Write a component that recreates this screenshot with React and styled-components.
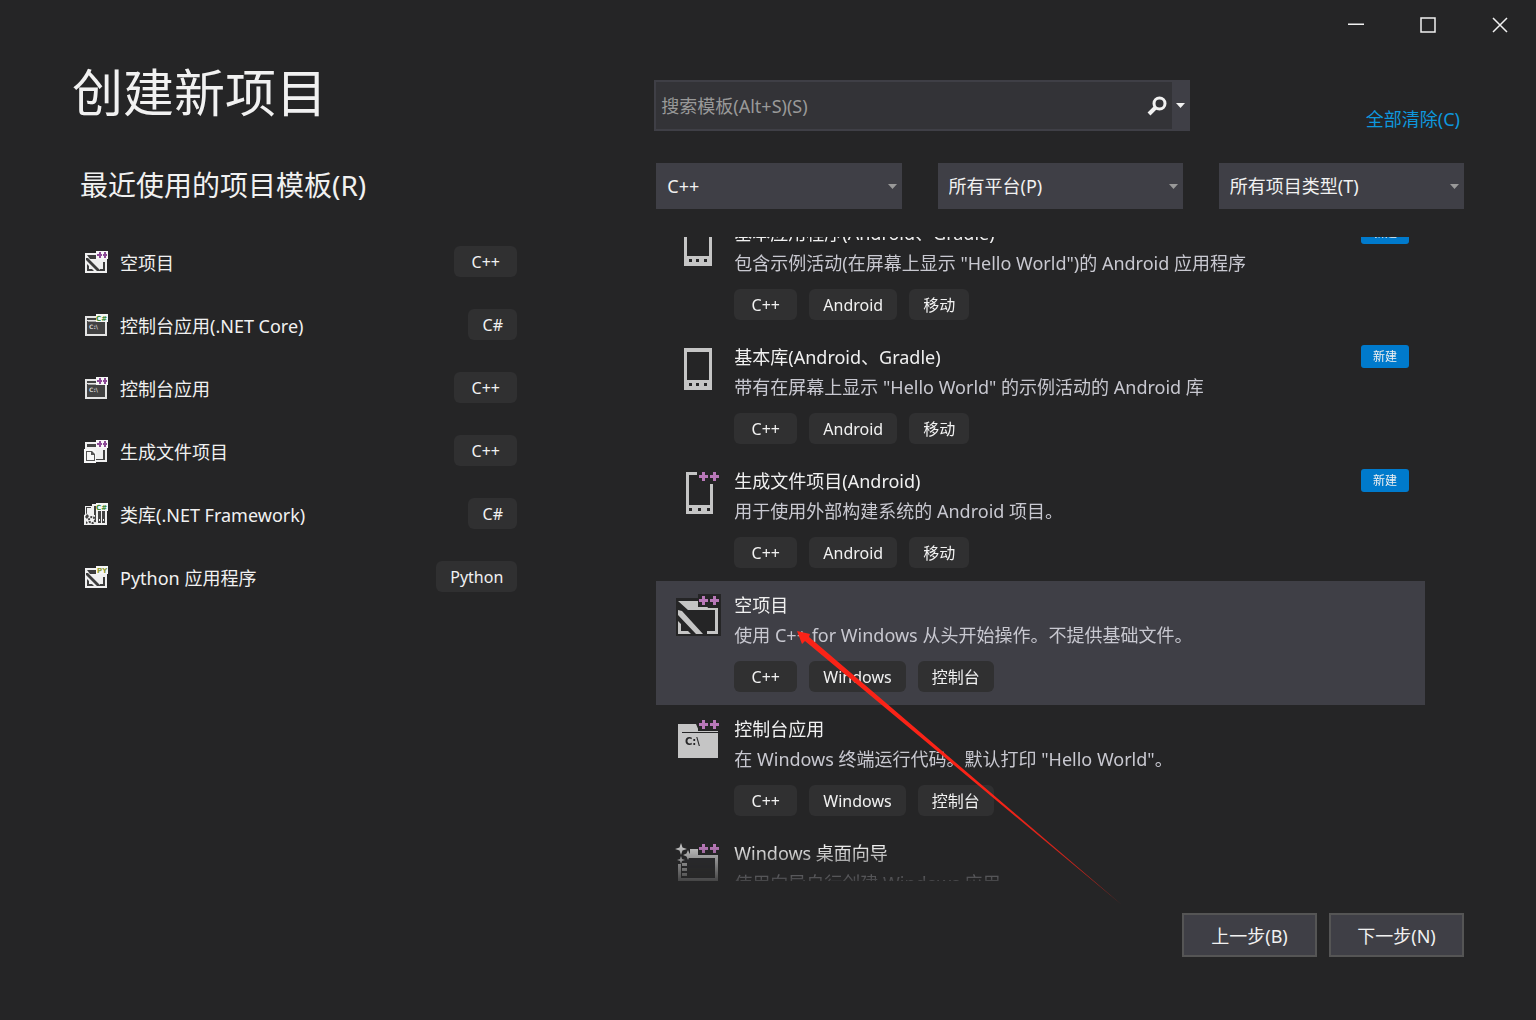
import { useLayoutEffect, useRef, useState } from 'react';
import styled, { ThemeProvider, createGlobalStyle } from 'styled-components';

const theme = {
  bg: '#252526',
  control: '#3f3f46',
  field: '#333337',
  tag: '#303031',
  text: '#f1f1f1',
  muted: '#c8c8d0',
  hint: '#999999',
  blue: '#007acc',
  link: '#0e97dd',
  icon: '#c5c5c5',
  plus: '#b878b8',
};

const GlobalStyle = createGlobalStyle`
  * {
    box-sizing: border-box;
  }
  body {
    margin: 0;
    background: ${theme.bg};
  }
  body, button, input, select {
    font-family: 'Noto Sans', 'Noto Sans CJK SC', sans-serif;
    font-size: 18px;
    color: ${theme.text};
  }
  button {
    padding: 0;
    background: none;
    border: 0;
    text-align: left;
  }
  ul {
    margin: 0;
    padding: 0;
    list-style: none;
  }
`;

const Window = styled.div`
  position: relative;
  display: flex;
  flex-direction: column;
  height: 100vh;
  min-height: 640px;
  overflow: hidden;
`;

const TitleBar = styled.div`
  display: flex;
  justify-content: flex-end;
`;

const WindowButton = styled.button`
  display: grid;
  place-items: center;
  width: 72px;
  height: 50px;
  &:hover {
    background: ${props => props.theme.control};
  }
`;

const Columns = styled.main`
  display: grid;
  flex: 1;
  grid-template-columns: minmax(0, 11fr) minmax(0, 20fr);
  grid-template-rows: minmax(0, 1fr);
  column-gap: 137px;
  min-height: 0;
  padding: 0 72px;
`;

const Recent = styled.section`
  padding-top: 12px;
`;

const PageTitle = styled.h1`
  margin: 0;
  font-size: 51px;
  font-weight: 400;
  line-height: 60px;
`;

const RecentTitle = styled.h2`
  margin: 43px 0 25px;
  padding-left: 8px;
  font-size: 28px;
  font-weight: 400;
  line-height: 40px;
`;

const RecentItem = styled.button`
  display: grid;
  grid-template-columns: 24px 1fr auto;
  align-items: center;
  column-gap: 12px;
  width: 100%;
  height: 63px;
  padding-left: 12px;
`;

const Tag = styled.span`
  min-width: ${props => (props.$wide ? 63 : 49)}px;
  padding: 1px 14px 0;
  background: ${props => props.theme.tag};
  border-radius: 6px;
  font-size: 16px;
  line-height: 30px;
  text-align: center;
`;

const Picker = styled.section`
  display: flex;
  flex-direction: column;
  min-height: 0;
  padding-top: 30px;
`;

const SearchRow = styled.div`
  display: flex;
  justify-content: space-between;
  gap: 48px;
`;

const SearchBox = styled.div`
  display: flex;
  flex: 0 1 536px;
  height: 51px;
  background: ${props => props.theme.field};
  border: 2px solid ${props => props.theme.control};
`;

const SearchInput = styled.input`
  flex: 1;
  min-width: 0;
  padding: 0 5px;
  background: none;
  border: 0;
  outline: 0;
  &::placeholder {
    color: ${props => props.theme.hint};
    opacity: 1;
  }
`;

const SearchButton = styled.button`
  display: grid;
  place-items: center;
  width: 30px;
`;

const SearchMenu = styled.button`
  display: grid;
  place-items: center;
  width: 16px;
  background: ${props => props.theme.control};
`;

const ClearLink = styled.a`
  align-self: flex-end;
  padding-right: 4px;
  color: ${props => props.theme.link};
  line-height: 24px;
  text-decoration: none;
  white-space: nowrap;
`;

const Filters = styled.div`
  display: grid;
  grid-template-columns: repeat(3, minmax(0, 1fr));
  column-gap: 36px;
  margin: 32px 0 28px;
  padding-left: 2px;
`;

const Filter = styled.label`
  display: grid;
  align-items: center;
  height: 46px;
  background: ${props => props.theme.control};
  & > * {
    grid-area: 1 / 1;
  }
  svg {
    justify-self: end;
    margin-right: 5px;
    pointer-events: none;
  }
`;

const Select = styled.select`
  width: 100%;
  height: 100%;
  padding: 0 24px 0 11px;
  appearance: none;
  background: none;
  border: 0;
  option {
    background: ${props => props.theme.field};
  }
`;

const Templates = styled.ul`
  flex: 1;
  min-height: 0;
  margin: 0 39px 0 2px;
  overflow-y: auto;
  scrollbar-width: none;
  mask-image: linear-gradient(to top, rgba(0, 0, 0, 0.2), #000 36px);
`;

const Template = styled.button`
  display: grid;
  grid-template-columns: 48px 1fr auto;
  column-gap: 12px;
  width: 100%;
  height: 124px;
  padding: 11px 16px 0 18px;
  background: ${props => (props.$selected ? props.theme.control : 'none')};
`;

const TemplateText = styled.div`
  line-height: 30px;
  white-space: nowrap;
`;

const TemplateName = styled.div`
  margin-top: -2px;
`;

const TemplateInfo = styled.div`
  color: ${props => props.theme.muted};
`;

const Tags = styled.div`
  display: flex;
  gap: 12px;
  margin-top: 11px;
`;

const Badge = styled.span`
  width: 48px;
  height: 23px;
  margin-top: 1px;
  background: ${props => props.theme.blue};
  border-radius: 3px;
  font-size: 12px;
  line-height: 23px;
  text-align: center;
`;

const Footer = styled.footer`
  display: flex;
  justify-content: flex-end;
  gap: 12px;
  padding: 32px 72px 63px;
`;

const StepButton = styled.button`
  width: 135px;
  height: 44px;
  background: ${props => props.theme.control};
  border: 2px solid #555555;
  text-align: center;
`;

const Pointer = styled.svg`
  position: absolute;
  top: 631px;
  left: 797px;
  pointer-events: none;
`;

const Caret = ({ color }) => (
  <svg width="9" height="5" aria-hidden="true">
    <path d="M0 0h9L4.5 5z" fill={color} />
  </svg>
);

const Magnifier = () => (
  <svg width="20" height="20" viewBox="0 0 20 20" fill="none" stroke="#f1f1f1" aria-hidden="true">
    <circle cx="12.5" cy="7.5" r="5.5" strokeWidth="3" />
    <path d="M8.5 11.5L2 18" strokeWidth="4" />
  </svg>
);

// the purple "++" in the corner of the 48px icons
const BigPlus = () => (
  <>
    <path d="M24 2h23v13H24z" fill="#252526" />
    <path
      d="M28 4h3v3h3v3h-3v3h-3v-3h-3V7h3zM39 4h3v3h3v3h-3v3h-3v-3h-3V7h3z"
      fill={theme.plus}
    />
  </>
);

const bigIcons = {
  phone: (
    <>
      <path d="M10 4h28v42H10zM13 8v28h22V8z" fill={theme.icon} fillRule="evenodd" />
      <path d="M15 39h3v3h-3zM22 39h3v3h-3zM30 39h3v3h-3z" fill="#252526" />
    </>
  ),
  phonePlus: (
    <>
      <path d="M12 4h11v3h-8v30h21V16h3v30H12z" fill={theme.icon} />
      <path d="M15 40h3v3h-3zM24 40h3v3h-3zM33 40h3v3h-3z" fill="#252526" />
      <BigPlus />
    </>
  ),
  empty: (
    <>
      <path d="M2 6h45v38H2z" fill="#252526" />
      <path d="M4 9h21v5h8l1 2h10v26H33v-3h8V18H14z" fill={theme.icon} />
      <path d="M4 18l4 1 21 23h-7L4 23zM4 29l3 3v7h7l3 3H4z" fill={theme.icon} />
      <BigPlus />
    </>
  ),
  console: (
    <>
      <path d="M4 8h18l3 7h19v27H4z" fill={theme.icon} />
      <path d="M8 16h36v1H8z" fill="#252526" />
      <text x="11" y="29" fontFamily="DejaVu Sans" fontSize="10" fontWeight="700" fill="#252526">
        C:\
      </text>
      <BigPlus />
    </>
  ),
  wizard: (
    <>
      <path
        d="M16 9h8v4l2 2h18v26H4V24h3v14h34V19H16l-3-3h3z"
        fill={theme.icon}
      />
      <path d="M10 18h31v20H10z" fill="#2b2b2d" />
      <path d="M8 23h5v3H8zM8 28h5v3H8zM8 33h5v3H8z" fill={theme.icon} />
      <path
        d="M7 3l1.5 4.500L13 9l-4.500 1.500L7 15l-1.500-4.500L1 9l4.500-1.500zM14 10l1.500 3.500L19 15l-3.500 1.500L14 20l-1.500-3.500L9 15l3.500-1.500zM7 16l1 3 3 1-3 1-1 3-1-3-3-1 3-1z"
        fill={theme.icon}
      />
      <BigPlus />
    </>
  ),
};

const BigIcon = ({ name }) => (
  <svg width="48" height="48" viewBox="0 0 48 48" aria-hidden="true">
    {bigIcons[name]}
  </svg>
);

const corners = {
  plus: (
    <path
      d="M15 2h2v2h1v2h-1v2h-2V6h-2V4h2zM20 2h2v2h1v2h-1v2h-2V6h-1V4h1z"
      fill="#8c4a96"
    />
  ),
  sharp: (
    <text x="12" y="8" fontFamily="DejaVu Sans" fontSize="7" fontWeight="700" fill="#388a34">
      C#
    </text>
  ),
  py: (
    <text x="13" y="8" fontFamily="DejaVu Sans" fontSize="7" fontWeight="700" fill="#8c9a30">
      PY
    </text>
  ),
};

const smallIcons = {
  empty: (
    <>
      <path d="M1 3h22v20H1z" fill="#f0f0f0" />
      <path d="M3 5h9v3h9v1H6zM19 12h2v9h-5v-2h3z" fill="#3c3c3c" />
      <path d="M2 8h2l13 13h-4L2 10zM3 14l2 2v3h3l2 2H3z" fill="#3c3c3c" />
    </>
  ),
  console: (
    <>
      <path d="M1 3h22v20H1z" fill="#e4e4e4" />
      <path d="M3 5h9v2H3zM3 8h18v13H3z" fill="#424242" />
      <path d="M4 8h16v1H4z" fill="#a0a0a0" />
      <text x="5" y="16" fontFamily="DejaVu Sans" fontSize="6" fontWeight="700" fill="#d0d0d0">
        C:\
      </text>
    </>
  ),
  makefile: (
    <>
      <path d="M1 3h22v20H1z" fill="#f0f0f0" />
      <path d="M3 5h9v3H3zM19 11h2v10h-9v-1h7z" fill="#424242" />
      <path d="M0 10h9l3 3v11H0z" fill="#f8f8f8" />
      <path d="M2 12h6l3 3v7H2zM3 13v8h7v-5H7v-3z" fill="#555555" fillRule="evenodd" />
    </>
  ),
  library: (
    <>
      <path d="M1 4h7V2h15v21H1z" fill="#f0f0f0" />
      <path d="M2 5h5v1H3v6l-1 1zM10 4h2v16h-2zM14 9h3v12h-3zM18 9h3v12h-3z" fill="#424242" />
      <path d="M15 17h1v2h-1zM19 17h1v2h-1z" fill="#f0f0f0" />
      <path d="M0 13l4-2 2 2h5v10H0z" fill="#f0f0f0" />
      <circle cx="8" cy="18" r="3" fill="none" stroke="#424242" strokeWidth="2" strokeDasharray="2 1" />
      <path d="M3 12l2 2-2 3-2-2zM2 19l2 2-2 1z" fill="#424242" />
    </>
  ),
};

const SmallIcon = ({ name, corner }) => (
  <svg width="24" height="24" viewBox="0 0 24 24" aria-hidden="true">
    {smallIcons[name]}
    <path d="M12 1h12v8H12z" fill="#f6f6f6" />
    {corners[corner]}
  </svg>
);

const recent = [
  { name: '空项目', lang: 'C++', icon: 'empty', corner: 'plus' },
  { name: '控制台应用(.NET Core)', lang: 'C#', icon: 'console', corner: 'sharp' },
  { name: '控制台应用', lang: 'C++', icon: 'console', corner: 'plus' },
  { name: '生成文件项目', lang: 'C++', icon: 'makefile', corner: 'plus' },
  { name: '类库(.NET Framework)', lang: 'C#', icon: 'library', corner: 'sharp' },
  { name: 'Python 应用程序', lang: 'Python', icon: 'empty', corner: 'py' },
];

const templates = [
  {
    name: '基本应用程序(Android、Gradle)',
    info: '包含示例活动(在屏幕上显示 "Hello World")的 Android 应用程序',
    tags: ['C++', 'Android', '移动'],
    icon: 'phone',
    isNew: true,
  },
  {
    name: '基本库(Android、Gradle)',
    info: '带有在屏幕上显示 "Hello World" 的示例活动的 Android 库',
    tags: ['C++', 'Android', '移动'],
    icon: 'phone',
    isNew: true,
  },
  {
    name: '生成文件项目(Android)',
    info: '用于使用外部构建系统的 Android 项目。',
    tags: ['C++', 'Android', '移动'],
    icon: 'phonePlus',
    isNew: true,
  },
  {
    name: '空项目',
    info: '使用 C++ for Windows 从头开始操作。不提供基础文件。',
    tags: ['C++', 'Windows', '控制台'],
    icon: 'empty',
  },
  {
    name: '控制台应用',
    info: '在 Windows 终端运行代码。默认打印 "Hello World"。',
    tags: ['C++', 'Windows', '控制台'],
    icon: 'console',
  },
  {
    name: 'Windows 桌面向导',
    info: '使用向导自行创建 Windows 应用。',
    tags: ['C++', 'Windows', '桌面'],
    icon: 'wizard',
  },
];

const filters = [
  { label: '语言', value: 'C++' },
  { label: '平台', value: '所有平台(P)' },
  { label: '项目类型', value: '所有项目类型(T)' },
];

const App = () => {
  const [selected, setSelected] = useState(3);
  const list = useRef(null);

  // the list opens a little way down
  useLayoutEffect(() => {
    list.current.scrollTop = 28;
  }, []);

  return (
    <ThemeProvider theme={theme}>
      <GlobalStyle />
      <Window>
        <TitleBar>
          <WindowButton aria-label="最小化">
            <svg width="16" height="16">
              <path d="M0 6.500h16v1.500H0z" fill="#f1f1f1" />
            </svg>
          </WindowButton>
          <WindowButton aria-label="最大化">
            <svg width="16" height="16">
              <path d="M1 1h14v14H1z" fill="none" stroke="#f1f1f1" strokeWidth="1.5" />
            </svg>
          </WindowButton>
          <WindowButton aria-label="关闭">
            <svg width="16" height="16">
              <path d="M1 1l14 14M15 1L1 15" stroke="#f1f1f1" strokeWidth="1.5" />
            </svg>
          </WindowButton>
        </TitleBar>
        <Columns>
          <Recent>
            <PageTitle>创建新项目</PageTitle>
            <RecentTitle>最近使用的项目模板(R)</RecentTitle>
            <ul>
              {recent.map(item => (
                <li key={item.name}>
                  <RecentItem>
                    <SmallIcon name={item.icon} corner={item.corner} />
                    <span>{item.name}</span>
                    <Tag $wide={item.lang === 'C++'}>{item.lang}</Tag>
                  </RecentItem>
                </li>
              ))}
            </ul>
          </Recent>
          <Picker>
            <SearchRow>
              <SearchBox>
                <SearchInput aria-label="搜索模板" placeholder="搜索模板(Alt+S)(S)" />
                <SearchButton aria-label="搜索">
                  <Magnifier />
                </SearchButton>
                <SearchMenu aria-label="搜索选项">
                  <Caret color="#f1f1f1" />
                </SearchMenu>
              </SearchBox>
              <ClearLink href="#clear">全部清除(C)</ClearLink>
            </SearchRow>
            <Filters>
              {filters.map(filter => (
                <Filter key={filter.label}>
                  <Select aria-label={filter.label}>
                    <option>{filter.value}</option>
                  </Select>
                  <Caret color="#999999" />
                </Filter>
              ))}
            </Filters>
            <Templates ref={list}>
              {templates.map((item, i) => (
                <li key={item.name}>
                  <Template $selected={i === selected} onClick={() => setSelected(i)}>
                    <BigIcon name={item.icon} />
                    <TemplateText>
                      <TemplateName>{item.name}</TemplateName>
                      <TemplateInfo>{item.info}</TemplateInfo>
                      <Tags>
                        {item.tags.map(tag => (
                          <Tag key={tag} $wide={tag === 'C++'}>
                            {tag}
                          </Tag>
                        ))}
                      </Tags>
                    </TemplateText>
                    {item.isNew && <Badge>新建</Badge>}
                  </Template>
                </li>
              ))}
            </Templates>
          </Picker>
        </Columns>
        <Footer>
          <StepButton>上一步(B)</StepButton>
          <StepButton>下一步(N)</StepButton>
        </Footer>
        <Pointer width="326" height="276" aria-hidden="true">
          <defs>
            <linearGradient id="tail" x1="0" y1="0" x2="1" y2="1">
              <stop offset="0.6" stopColor="#fa2317" />
              <stop offset="1" stopColor="#fa2317" stopOpacity="0.6" />
            </linearGradient>
          </defs>
          <path d="M0 0l13 3-1 3 313 268L8 10l-3 3z" fill="url(#tail)" />
        </Pointer>
      </Window>
    </ThemeProvider>
  );
};

export default App;
